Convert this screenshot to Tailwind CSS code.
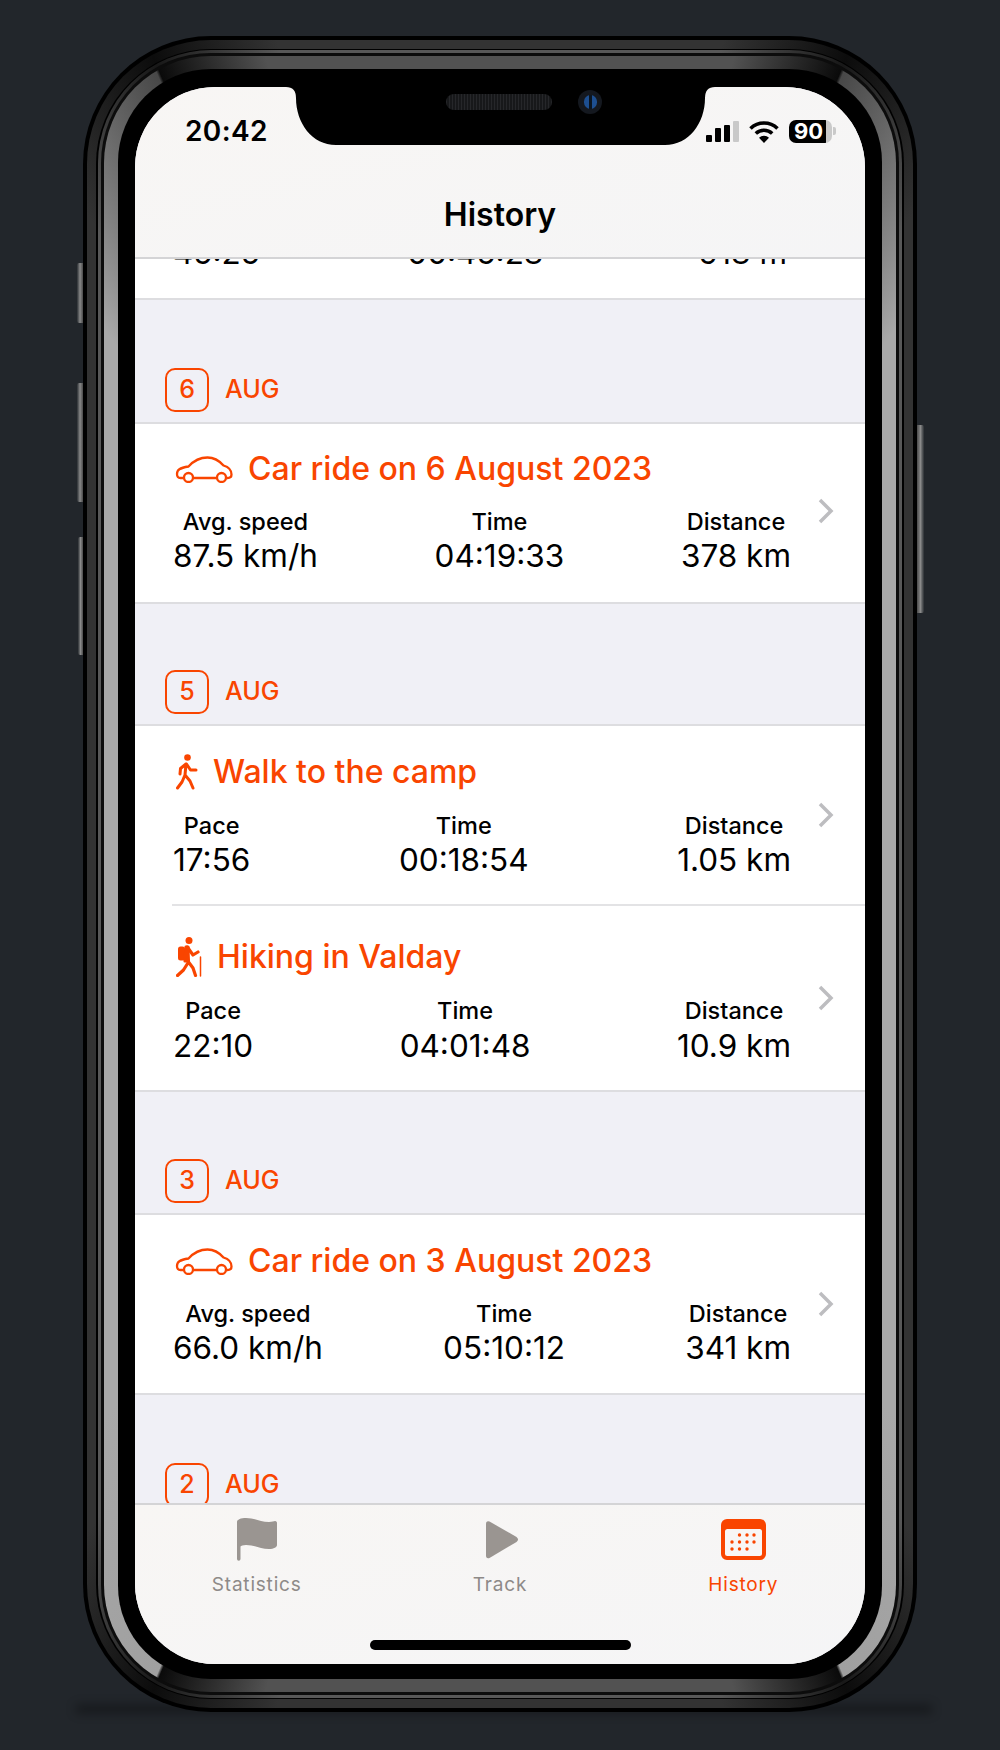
<!DOCTYPE html>
<html lang="en">
<head>
  <meta charset="UTF-8" />
  <meta name="viewport" content="width=device-width, initial-scale=1.0"/>
  <title>History</title>
  <script src="https://cdn.jsdelivr.net/npm/@tailwindcss/browser@4"></script>
</head>

<body class="bg-[#22262b] w-[1000px] h-[1750px] overflow-hidden pt-[36px] pl-[83px] font-[family-name:Inter,sans-serif] text-black">
  <!-- Phone -->
  <div class="relative w-[834px] h-[1676px]">
    <!-- Shadow and side buttons -->
    <div class="absolute left-[-8px] right-[-16px] bottom-[-2px] h-[10px] bg-black/30 blur-[5px] rounded-full"></div>
    <div class="absolute left-[-6px] top-[227px] w-[6px] h-[60px] bg-gradient-to-r from-[#2c3034] via-[#8a8a8a] to-[#4a4a4a] rounded-l-[2px] blur-[0.5px]"></div>
    <div class="absolute left-[-6px] top-[347px] w-[6px] h-[119px] bg-gradient-to-r from-[#2c3034] via-[#8a8a8a] to-[#4a4a4a] rounded-l-[2px] blur-[0.5px]"></div>
    <div class="absolute left-[-5px] top-[501px] w-[5px] h-[118px] bg-gradient-to-r from-[#2c3034] via-[#8a8a8a] to-[#4a4a4a] rounded-l-[2px] blur-[0.5px]"></div>
    <div class="absolute right-[-7px] top-[389px] w-[7px] h-[188px] bg-gradient-to-r from-[#4a4a4a] via-[#8a8a8a] to-[#2c3034] rounded-r-[2px] blur-[0.5px]"></div>

    <!-- Frame layers -->
    <div class="relative h-full bg-black p-[4px] rounded-[128px]">
      <div class="h-full p-[9px] rounded-[124px] bg-[conic-gradient(#333_0deg,#333_15deg,#0c0c0c_23deg,#333_32deg,#333_148deg,#0c0c0c_157deg,#333_165deg,#333_195deg,#0c0c0c_203deg,#333_212deg,#333_328deg,#0c0c0c_337deg,#333_345deg)]">
        <div class="h-full bg-black py-[1px] px-[2px] rounded-[115px]">
          <div class="h-full p-[3px] rounded-[113px] bg-[conic-gradient(#585858_0deg,#585858_15deg,#181818_23deg,#585858_32deg,#585858_148deg,#181818_157deg,#585858_165deg,#585858_195deg,#181818_203deg,#585858_212deg,#585858_328deg,#181818_337deg,#585858_345deg)]">
            <div class="h-full bg-[#0c0c0c] p-[3px] rounded-[110px]">
              <div class="h-full px-[14px] py-[13px] rounded-[107px] bg-[conic-gradient(#525252_0deg,#525252_16deg,#0a0a0a_23deg,#484848_23.2deg,#a8a8a8_36deg,#a8a8a8_144deg,#a0a0a0_156.8deg,#0a0a0a_157deg,#525252_164deg,#525252_196deg,#0a0a0a_203deg,#a0a0a0_203.2deg,#a8a8a8_216deg,#a8a8a8_324deg,#484848_336.8deg,#0a0a0a_337deg,#525252_344deg)]">
                <div class="h-full bg-black px-[17px] pt-[18px] pb-[15px] rounded-[93px]">

                  <!-- Screen -->
                  <div class="relative w-[730px] h-[1577px] flex flex-col bg-[#f0f0f6] rounded-[80px] overflow-hidden">

                    <!-- Notch -->
                    <svg class="absolute left-[151px] top-0 z-10" width="429" height="58" viewBox="0 0 429 58">
                      <path fill="#000" d="M0 0Q10 0 10 11C10 36 26 58 50 58H379C403 58 419 36 419 11Q419 0 429 0Z"/>
                    </svg>
                    <div class="absolute left-[311px] top-[7px] z-20 w-[106px] h-[16px] rounded-full bg-[#17181a] bg-[repeating-linear-gradient(90deg,#26272a_0_1px,#17181a_1px_3px)]"></div>
                    <div class="absolute left-[443px] top-[3px] z-20 w-[24px] h-[24px] rounded-full bg-[#14181f] flex items-center justify-center">
                      <div class="w-[13px] h-[14px] rounded-full bg-[linear-gradient(90deg,#1d4f91_0_40%,#0b1520_40%_60%,#1d4f91_60%)]"></div>
                    </div>

                    <!-- Nav bar -->
                    <header class="h-[172px] shrink-0 bg-gradient-to-br from-[#f8f6f4] to-[#f5f5f6] border-b-[2px] border-[#d4d4d6]">
                      <div class="flex items-center justify-between h-[30px] mt-[29px] pl-[50px] pr-[29px]">
                        <div class="text-[28px] leading-[30px] font-semibold tracking-[0.4px]">20:42</div>
                        <div class="flex items-center">
                          <div class="flex items-end gap-[3px] h-[23px] pb-[1px]">
                            <div class="w-[6px] h-[7px] bg-black rounded-[1px]"></div>
                            <div class="w-[6px] h-[14px] bg-black rounded-[1px]"></div>
                            <div class="w-[6px] h-[17px] bg-black rounded-[1px]"></div>
                            <div class="w-[6px] h-[21px] bg-[#c9c9c9] rounded-[1px]"></div>
                          </div>
                          <svg class="ml-[10px]" width="30" height="23" viewBox="0 0 30 23">
                            <path d="M1.500 8.500A19.500 19.500 0 0 1 28.500 8.500" fill="none" stroke="#000" stroke-width="3.600"/>
                            <path d="M6.800 13.500A12 12 0 0 1 23.200 13.500" fill="none" stroke="#000" stroke-width="3.600"/>
                            <path d="M15 23L10 17.800A7 7 0 0 1 20 17.800Z" fill="#000"/>
                          </svg>
                          <div class="ml-[10px] w-[43px] h-[23px] rounded-[7px] bg-[linear-gradient(90deg,#000_87%,#c9c9c9_87%)] flex items-center pl-[5px] text-white text-[22px] leading-[23px] font-bold">90</div>
                          <div class="w-[3px] h-[8px] bg-[#c9c9c9] rounded-r-[2px] ml-[1px]"></div>
                        </div>
                      </div>
                      <h1 class="mt-[47px] text-center text-[32px] leading-[44px] font-semibold">History</h1>
                    </header>

                    <!-- List -->
                    <main class="flex-1 min-h-0 overflow-hidden">
                      <!-- Row scrolled off under the nav bar -->
                      <div class="h-[41px] bg-white border-b-[2px] border-[#dddde0] overflow-hidden pl-[38px] pr-[78px]">
                        <div class="flex justify-between -mt-[24px] text-[31.5px] leading-[36px]">
                          <div>45:25</div>
                          <div class="-ml-[8px]">00:45:28</div>
                          <div>918 m</div>
                        </div>
                      </div>

                      <!-- 6 Aug -->
                      <div class="h-[122px] flex items-end gap-[16px] pl-[30px] pb-[10px]">
                        <div class="w-[44px] h-[44px] rounded-[10px] border-[2px] border-[#f94500] flex items-center justify-center text-[#f94500] text-[25px] font-medium">6</div>
                        <div class="h-[44px] flex items-center text-[#f94500] text-[25px] font-medium">AUG</div>
                      </div>
                      <div class="bg-white border-y-[2px] border-[#dddde0]">
                        <a class="flex items-center pr-[31px]">
                          <div class="flex-1 pl-[38px] pt-[26px] pb-[28px]">
                            <div class="flex items-center h-[38px] text-[#f94500] text-[32px] leading-[38px] font-medium">
                              <svg class="ml-[2px] mr-[15px]" width="58" height="27" viewBox="0 0 57 27" fill="none" stroke="#f94500" stroke-width="2.300" stroke-linejoin="round">
                                <path d="M8 22H5C2.500 22 1.500 20.500 1.500 18C1.500 14 4 12 13 10.500C18 5 23 1.500 32 1.500C39 1.500 44 5 48 9.500C53 11 56 13.500 56 18.500C56 21 55 22 52 22H51M18 22H41"/>
                                <circle cx="13" cy="21.500" r="4.500"/>
                                <circle cx="46" cy="21.500" r="4.500"/>
                              </svg>
                              Car ride on 6 August 2023
                            </div>
                            <div class="flex justify-between mt-[19px]">
                              <div class="text-center">
                                <div class="text-[23.5px] leading-[30px] font-medium">Avg. speed</div>
                                <div class="mt-[1px] text-[31.5px] leading-[36px]">87.5 km/h</div>
                              </div>
                              <div class="text-center">
                                <div class="text-[23.5px] leading-[30px] font-medium">Time</div>
                                <div class="mt-[1px] text-[31.5px] leading-[36px]">04:19:33</div>
                              </div>
                              <div class="text-center">
                                <div class="text-[23.5px] leading-[30px] font-medium">Distance</div>
                                <div class="mt-[1px] text-[31.5px] leading-[36px]">378 km</div>
                              </div>
                            </div>
                          </div>
                          <svg class="ml-[26px] -mt-[4px] shrink-0" width="17" height="26" viewBox="0 0 17 26" fill="none" stroke="#bdbdc0" stroke-width="3.500"><path d="M3 2L14 13L3 24"/></svg>
                        </a>
                      </div>

                      <!-- 5 Aug -->
                      <div class="h-[120px] flex items-end gap-[16px] pl-[30px] pb-[10px]">
                        <div class="w-[44px] h-[44px] rounded-[10px] border-[2px] border-[#f94500] flex items-center justify-center text-[#f94500] text-[25px] font-medium">5</div>
                        <div class="h-[44px] flex items-center text-[#f94500] text-[25px] font-medium">AUG</div>
                      </div>
                      <div class="bg-white border-y-[2px] border-[#dddde0]">
                        <a class="flex items-center pr-[31px]">
                          <div class="flex-1 pl-[38px] pt-[27px] pb-[26px]">
                            <div class="flex items-center h-[38px] text-[#f94500] text-[32px] leading-[38px] font-medium">
                              <svg class="ml-[3px] mr-[15px]" width="22" height="36" viewBox="0 0 22 36" fill="none" stroke="#f94500" stroke-width="3" stroke-linecap="round" stroke-linejoin="round">
                                <circle cx="11.500" cy="3.500" r="3.300" fill="#f94500" stroke="none"/>
                                <path d="M10 10L9 21L14 27L17 34M9 21L6 28L1.500 34M10 10L4.500 14.500L4 20M10.500 10L14.500 16H20"/>
                              </svg>
                              Walk to the camp
                            </div>
                            <div class="flex justify-between mt-[20px]">
                              <div class="text-center">
                                <div class="text-[23.5px] leading-[30px] font-medium">Pace</div>
                                <div class="mt-[1px] text-[31.5px] leading-[36px]">17:56</div>
                              </div>
                              <div class="text-center">
                                <div class="text-[23.5px] leading-[30px] font-medium">Time</div>
                                <div class="mt-[1px] text-[31.5px] leading-[36px]">00:18:54</div>
                              </div>
                              <div class="text-center">
                                <div class="text-[23.5px] leading-[30px] font-medium">Distance</div>
                                <div class="mt-[1px] text-[31.5px] leading-[36px]">1.05 km</div>
                              </div>
                            </div>
                          </div>
                          <svg class="ml-[26px] -mt-[0px] shrink-0" width="17" height="26" viewBox="0 0 17 26" fill="none" stroke="#bdbdc0" stroke-width="3.500"><path d="M3 2L14 13L3 24"/></svg>
                        </a>
                        <div class="ml-[37px] border-t-[2px] border-[#e3e3e5]"></div>
                        <a class="flex items-center pr-[31px]">
                          <div class="flex-1 pl-[38px] pt-[32px] pb-[26px]">
                            <div class="flex items-center h-[38px] text-[#f94500] text-[32px] leading-[38px] font-medium">
                              <svg class="ml-[3px] mr-[15px]" width="26" height="40" viewBox="0 0 26 40" fill="none" stroke="#f94500" stroke-width="3.200" stroke-linecap="round" stroke-linejoin="round">
                                <circle cx="13" cy="3.600" r="3.500" fill="#f94500" stroke="none"/>
                                <rect x="2" y="9.500" width="7" height="14" rx="2.500" fill="#f94500" stroke="none"/>
                                <path d="M11 10L12.500 25L17 31L19.500 38.500M12.500 25L7.500 33L1.500 38.500M12 11L17 18L22 15" />
                                <path d="M10 10H12V24H9Z" fill="#f94500"/>
                                <path d="M24.500 20V39" stroke-width="1.500"/>
                              </svg>
                              Hiking in Valday
                            </div>
                            <div class="flex justify-between mt-[20px]">
                              <div class="text-center">
                                <div class="text-[23.5px] leading-[30px] font-medium">Pace</div>
                                <div class="mt-[2px] text-[31.5px] leading-[36px]">22:10</div>
                              </div>
                              <div class="text-center">
                                <div class="text-[23.5px] leading-[30px] font-medium">Time</div>
                                <div class="mt-[2px] text-[31.5px] leading-[36px]">04:01:48</div>
                              </div>
                              <div class="text-center">
                                <div class="text-[23.5px] leading-[30px] font-medium">Distance</div>
                                <div class="mt-[2px] text-[31.5px] leading-[36px]">10.9 km</div>
                              </div>
                            </div>
                          </div>
                          <svg class="ml-[26px] -mt-[0px] shrink-0" width="17" height="26" viewBox="0 0 17 26" fill="none" stroke="#bdbdc0" stroke-width="3.500"><path d="M3 2L14 13L3 24"/></svg>
                        </a>
                      </div>

                      <!-- 3 Aug -->
                      <div class="h-[121px] flex items-end gap-[16px] pl-[30px] pb-[10px]">
                        <div class="w-[44px] h-[44px] rounded-[10px] border-[2px] border-[#f94500] flex items-center justify-center text-[#f94500] text-[25px] font-medium">3</div>
                        <div class="h-[44px] flex items-center text-[#f94500] text-[25px] font-medium">AUG</div>
                      </div>
                      <div class="bg-white border-y-[2px] border-[#dddde0]">
                        <a class="flex items-center pr-[31px]">
                          <div class="flex-1 pl-[38px] pt-[27px] pb-[27px]">
                            <div class="flex items-center h-[38px] text-[#f94500] text-[32px] leading-[38px] font-medium">
                              <svg class="ml-[2px] mr-[15px]" width="58" height="27" viewBox="0 0 57 27" fill="none" stroke="#f94500" stroke-width="2.300" stroke-linejoin="round">
                                <path d="M8 22H5C2.500 22 1.500 20.500 1.500 18C1.500 14 4 12 13 10.500C18 5 23 1.500 32 1.500C39 1.500 44 5 48 9.500C53 11 56 13.500 56 18.500C56 21 55 22 52 22H51M18 22H41"/>
                                <circle cx="13" cy="21.500" r="4.500"/>
                                <circle cx="46" cy="21.500" r="4.500"/>
                              </svg>
                              Car ride on 3 August 2023
                            </div>
                            <div class="flex justify-between mt-[19px]">
                              <div class="text-center">
                                <div class="text-[23.5px] leading-[30px] font-medium">Avg. speed</div>
                                <div class="mt-[1px] text-[31.5px] leading-[36px]">66.0 km/h</div>
                              </div>
                              <div class="text-center">
                                <div class="text-[23.5px] leading-[30px] font-medium">Time</div>
                                <div class="mt-[1px] text-[31.5px] leading-[36px]">05:10:12</div>
                              </div>
                              <div class="text-center">
                                <div class="text-[23.5px] leading-[30px] font-medium">Distance</div>
                                <div class="mt-[1px] text-[31.5px] leading-[36px]">341 km</div>
                              </div>
                            </div>
                          </div>
                          <svg class="ml-[26px] -mt-[0px] shrink-0" width="17" height="26" viewBox="0 0 17 26" fill="none" stroke="#bdbdc0" stroke-width="3.500"><path d="M3 2L14 13L3 24"/></svg>
                        </a>
                      </div>

                      <!-- 2 Aug, cut off by the tab bar -->
                      <div class="h-[122px] flex items-end gap-[16px] pl-[30px] pb-[10px]">
                        <div class="w-[44px] h-[44px] rounded-[10px] border-[2px] border-[#f94500] flex items-center justify-center text-[#f94500] text-[25px] font-medium">2</div>
                        <div class="h-[44px] flex items-center text-[#f94500] text-[25px] font-medium">AUG</div>
                      </div>
                    </main>

                    <!-- Tab bar -->
                    <nav class="relative h-[161px] shrink-0 border-t-[2px] border-[#d4d4d6] bg-gradient-to-br from-[#f8f6f4] to-[#f5f5f6]">
                      <div class="grid grid-cols-3 pt-[13px]">
                        <div class="flex flex-col items-center text-[#8e8a88]">
                          <svg width="40" height="43" viewBox="0 0 40 43" fill="#9a9591"><path d="M0 4C0 1.500 4 0 9 0C18 0 23 4 32 4C35 4 37 3 38 3C39.500 3 40 4 40 5V27C40 29 37 31 32 31C23 31 18 27 9 27C6 27 4 28 3.500 28.500V41A1.700 1.700 0 0 1 0 41Z"/></svg>
                          <div class="mt-[11px] text-[19px] leading-[26px] tracking-[0.8px]">Statistics</div>
                        </div>
                        <div class="flex flex-col items-center text-[#8e8a88]">
                          <svg class="ml-[4px]" width="34" height="43" viewBox="0 0 34 43" fill="#9a9591"><path d="M1 6Q1 2.500 4.500 3.500L31.500 19Q34.500 21.500 31.500 24L4.500 40Q1 41 1 37.500Z"/></svg>
                          <div class="mt-[11px] text-[19px] leading-[26px] tracking-[0.8px]">Track</div>
                        </div>
                        <div class="flex flex-col items-center text-[#f94500]">
                          <svg width="45" height="43" viewBox="0 0 45 43" fill="#f94500">
                            <rect y="1" width="45" height="41" rx="6"/>
                            <rect x="4" y="11" width="37" height="27" rx="2.500" fill="#f8f6f5"/>
                            <g>
                              <circle cx="18.500" cy="17" r="1.700"/><circle cx="26" cy="17" r="1.700"/><circle cx="33" cy="17" r="1.700"/>
                              <circle cx="11" cy="24" r="1.700"/><circle cx="18.500" cy="24" r="1.700"/><circle cx="26" cy="24" r="1.700"/><circle cx="33" cy="24" r="1.700"/>
                              <circle cx="11" cy="31" r="1.700"/><circle cx="18.500" cy="31" r="1.700"/><circle cx="26" cy="31" r="1.700"/>
                            </g>
                          </svg>
                          <div class="mt-[11px] text-[19px] leading-[26px] tracking-[0.8px]">History</div>
                        </div>
                      </div>
                      <div class="absolute left-[235px] bottom-[14px] w-[261px] h-[10px] rounded-full bg-black"></div>
                    </nav>
                  </div>

                </div>
              </div>
            </div>
          </div>
        </div>
      </div>
    </div>
  </div>
</body>
</html>
